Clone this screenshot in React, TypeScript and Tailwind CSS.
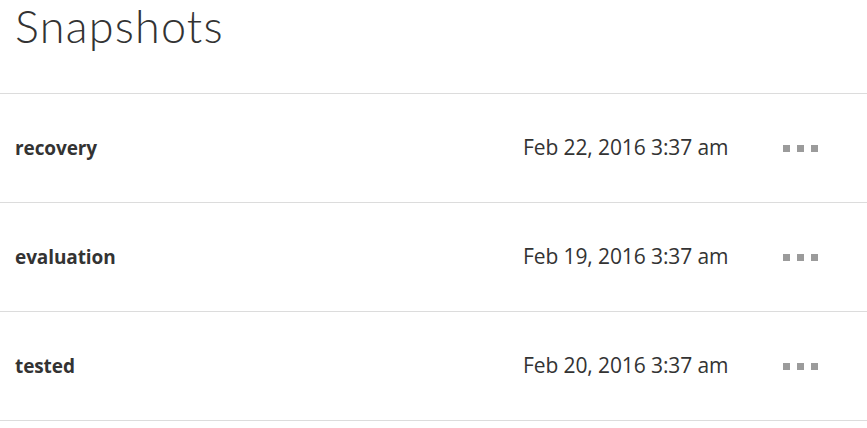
const snapshots = [
  { name: 'recovery', date: 'Feb 22, 2016 3:37 am' },
  { name: 'evaluation', date: 'Feb 19, 2016 3:37 am' },
  { name: 'tested', date: 'Feb 20, 2016 3:37 am' },
]

function MoreDots() {
  return (
    <div className="flex w-[36px] items-center gap-[7px]">
      <span className="block h-[7px] w-[7px] bg-[#9b9b9b]" />
      <span className="block h-[7px] w-[7px] bg-[#9b9b9b]" />
      <span className="block h-[7px] w-[7px] bg-[#9b9b9b]" />
    </div>
  )
}

export default function App() {
  return (
    <div className="min-h-screen bg-white font-['Open_Sans','Lato',sans-serif] text-[#333]">
      <header className="h-[94px] border-b border-[#dcdcdc] px-[15px]">
        <h1 className="font-['Lato',sans-serif] text-[45px] leading-[52px] font-light tracking-[1.2px] text-[#333]">
          Snapshots
        </h1>
      </header>
      <ul>
        {snapshots.map((snapshot) => (
          <li
            key={snapshot.name}
            className="flex h-[109px] items-center border-b border-[#dcdcdc] pr-[48px] pl-[15px]"
          >
            <span className="flex-1 text-[19px] font-bold tracking-[-0.1px] text-[#333]">
              {snapshot.name}
            </span>
            <span className="w-[260px] text-[21px] tracking-[-0.1px] text-[#333]">
              {snapshot.date}
            </span>
            <MoreDots />
          </li>
        ))}
      </ul>
    </div>
  )
}
